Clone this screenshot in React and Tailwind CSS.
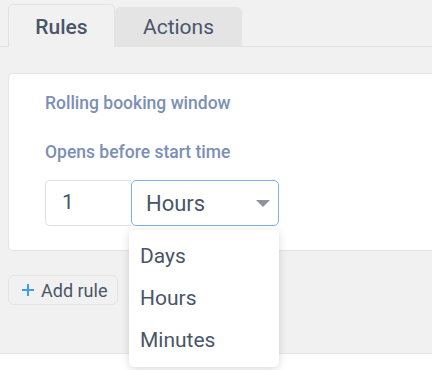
import React from "react";

export default function App() {
  return (
    <div className="relative w-[432px] h-[370px] overflow-hidden bg-white" style={{ fontFamily: "Roboto, 'Liberation Sans', sans-serif" }}>
      <div className="h-[354px] bg-[#f1f1f1] border-b border-[#e4e4e4] overflow-hidden">
        <div className="flex items-end h-[47px] pl-[8px] border-b border-[#e0e0e0]">
          <div className="-mb-px w-[107px] h-[43px] flex items-center justify-center pt-[3px] rounded-t-[5px] border border-b-0 border-[#e2e2e2] bg-[#f1f1f1] text-[21px] font-medium text-[#4a5568]">
            Rules
          </div>
          <div className="-mb-px w-[127px] h-[40px] flex items-center justify-center pt-[2px] rounded-t-[5px] bg-[#e4e4e4] text-[21px] text-[#4a5568]">
            Actions
          </div>
        </div>
        <div className="mt-[26px] ml-[8px] w-[440px] h-[178px] rounded-[5px] border border-[#e4e4e4] bg-white pl-[36px] pt-[17px]">
          <div className="h-[24px] leading-[24px] text-[17.5px] font-medium text-[#7b8fb5]">Rolling booking window</div>
          <div className="mt-[25px] h-[24px] leading-[24px] text-[17.5px] font-medium text-[#7b8fb5]">Opens before start time</div>
          <div className="mt-[16px] flex">
            <div className="w-[86px] h-[46px] flex items-center pl-[16px] rounded-l-[5px] border border-r-0 border-[#e0e0e0] text-[21px] text-[#4a5568]">1</div>
            <div className="w-[148px] h-[46px] flex items-center justify-between pl-[14px] pr-[8px] rounded-[5px] border border-[#7eb0f0] text-[22px] text-[#4a5568]">
              <span>Hours</span>
              <svg width="14" height="7" viewBox="0 0 14 7"><path d="M0 0 H14 L7 7 Z" fill="#8d929e" /></svg>
            </div>
          </div>
        </div>
        <div className="mt-[24px] ml-[8px] w-[110px] h-[30px] flex items-center pl-[12px] rounded-[6px] border border-[#e4e4e4] text-[18px] text-[#4a5568]">
          <svg width="14" height="14" viewBox="0 0 14 14" className="mr-[6px]"><path d="M7 1 V13 M1 7 H13" stroke="#3d9cf0" strokeWidth="2" /></svg>
          <span>Add rule</span>
        </div>
      </div>
      <div className="absolute left-[129px] top-[230px] w-[150px] h-[137px] rounded-[5px] bg-white shadow-[0_2px_8px_rgba(0,0,0,0.15)] pt-[6px] text-[21px] text-[#4a5568]">
        <div className="h-[42px] flex items-center pl-[11px]">Days</div>
        <div className="h-[42px] flex items-center pl-[11px]">Hours</div>
        <div className="h-[42px] flex items-center pl-[11px]">Minutes</div>
      </div>
    </div>
  );
}
